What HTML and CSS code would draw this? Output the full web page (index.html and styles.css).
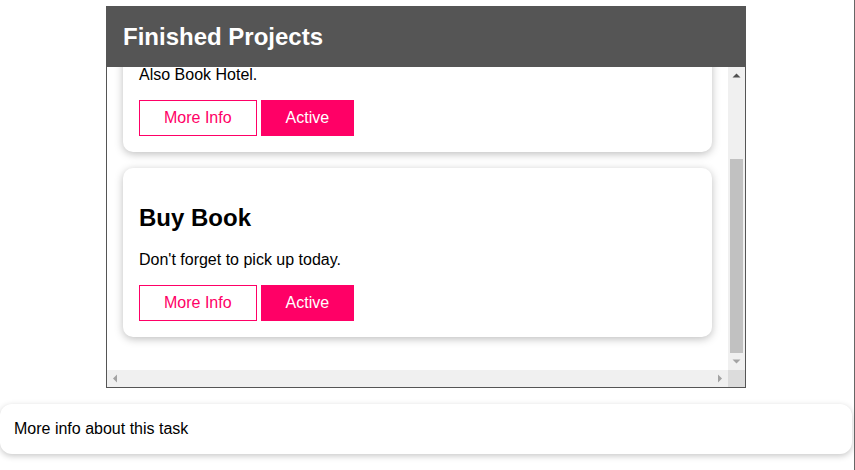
FILE: index.html
```html
<!DOCTYPE html>
<html lang="en">
<head>
<meta charset="utf-8">
<title>Finished Projects</title>
<link rel="stylesheet" href="styles.css">
</head>
<body>
<div class="page">
  <section class="panel">
    <header class="panel-head"><h1 class="panel-title">Finished Projects</h1></header>
    <div class="scroller">
      <div class="viewport">
        <div class="list">
          <article class="card">
            <p class="card-text">Also Book Hotel.</p>
            <div class="actions"><button class="btn btn-outline">More Info</button><button class="btn btn-fill">Active</button></div>
          </article>
          <article class="card">
            <h2 class="card-title">Buy Book</h2>
            <p class="card-text">Don't forget to pick up today.</p>
            <div class="actions"><button class="btn btn-outline">More Info</button><button class="btn btn-fill">Active</button></div>
          </article>
        </div>
      </div>
      <div class="vbar">
        <div class="sb-btn"><svg width="17" height="17" viewBox="0 0 17 17"><polygon points="4.5,10.5 8.5,6.5 12.5,10.5" fill="#505050"/></svg></div>
        <div class="vtrack"><div class="vthumb"></div></div>
        <div class="sb-btn"><svg width="17" height="17" viewBox="0 0 17 17"><polygon points="4.5,6.5 12.5,6.5 8.5,10.5" fill="#a3a3a3"/></svg></div>
      </div>
      <div class="hbar">
        <div class="sb-btn"><svg width="17" height="17" viewBox="0 0 17 17"><polygon points="10,4.5 10,12.5 6,8.5" fill="#a3a3a3"/></svg></div>
        <div class="htrack"></div>
        <div class="sb-btn"><svg width="17" height="17" viewBox="0 0 17 17"><polygon points="7,4.5 7,12.5 11,8.5" fill="#a3a3a3"/></svg></div>
      </div>
      <div class="corner"></div>
    </div>
  </section>
  <div class="info-card">More info about this task</div>
</div>
</body>
</html>
```
FILE: styles.css
```css
* { box-sizing: border-box; }
html, body { margin: 0; padding: 0; background: #fff; }
body { font-family: "Liberation Sans", Arial, sans-serif; font-size: 16px; color: #000; }

.page {
  width: 855px;
  min-height: 470px;
  border-right: 1px solid #666;
  padding-top: 6px;
  overflow: hidden;
}

.panel {
  width: 640px;
  margin-left: 106px;
  border: 1px solid #555;
}

.panel-head {
  height: 60px;
  background: #555;
  display: flex;
  align-items: center;
  padding: 0 16px;
}
.panel-title {
  margin: 0;
  font-size: 24px;
  font-weight: bold;
  color: #fff;
  line-height: 28px;
}

.scroller {
  display: grid;
  grid-template-columns: 1fr 17px;
  grid-template-rows: 303px 17px;
}

.viewport {
  overflow: hidden;
  display: flex;
  flex-direction: column;
  justify-content: flex-end;
}

.list {
  flex-shrink: 0;
  display: flex;
  flex-direction: column;
  gap: 16px;
  padding: 33px 16px;
}

.card {
  background: #fff;
  border-radius: 10px;
  box-shadow: 0 2px 8px rgba(0,0,0,0.26);
  padding: 16px;
}
.card-title {
  margin: 20px 0;
  font-size: 24px;
  line-height: 28px;
  font-weight: bold;
}
.card-text {
  margin: 0 0 18px;
  line-height: 15px;
}

.actions { display: flex; gap: 4px; }

.btn {
  font-family: "Liberation Sans", Arial, sans-serif;
  font-size: 16px;
  line-height: 18px;
  padding: 8px 24px;
  border: 1px solid #ff0066;
  cursor: pointer;
}
.btn-outline { background: #fff; color: #ff0066; }
.btn-fill { background: #ff0066; color: #fff; }

.vbar {
  background: #f0f0f0;
  display: flex;
  flex-direction: column;
}
.sb-btn { width: 17px; height: 17px; flex-shrink: 0; }
.sb-btn svg { display: block; }
.vtrack {
  flex: 1;
  display: flex;
  flex-direction: column;
  justify-content: flex-end;
}
.vthumb {
  height: 194px;
  margin: 0 2px;
  background: #c1c1c1;
}

.hbar {
  background: #f0f0f0;
  display: flex;
}
.htrack { flex: 1; }
.corner { background: #dcdcdc; }

.info-card {
  width: 852px;
  margin-top: 16px;
  background: #fff;
  border-radius: 12px;
  box-shadow: 0 2px 6px rgba(0,0,0,0.22);
  padding: 16px 14px;
  line-height: 18px;
}
```
